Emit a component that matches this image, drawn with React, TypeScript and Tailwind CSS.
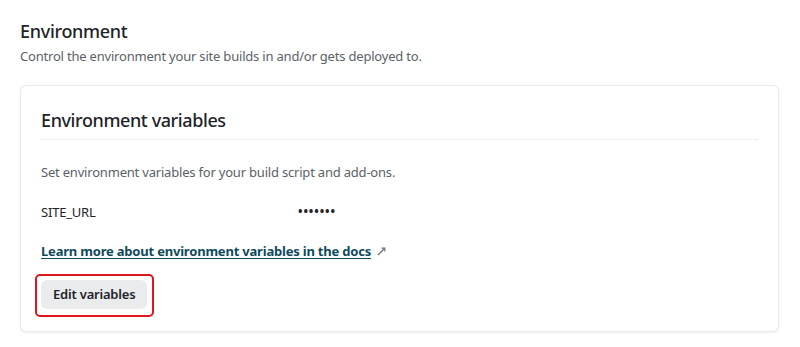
export default function App() {
  return (
    <div
      className="w-[800px] h-[347px] bg-white px-5 pt-[19px] text-[#1f2328] tracking-[-0.2px]"
      style={{ fontFamily: '"Noto Sans", "Open Sans", sans-serif' }}
    >
      <h2 className="text-[18px] leading-6 font-medium tracking-[-0.3px]">Environment</h2>
      <p className="mt-[3px] text-[13px] leading-5 text-[#5b5f66]">
        Control the environment your site builds in and/or gets deployed to.
      </p>

      <section className="mt-[19px] w-[759px] rounded-md border border-[#e8e9ec] bg-white shadow-[0_1px_3px_rgba(0,0,0,0.07)]">
        <div className="mx-5 pt-[22px] pb-[7px] border-b border-dotted border-[#e3e4e7]">
          <h3 className="text-[18px] leading-6 font-medium tracking-[-0.4px]">Environment variables</h3>
        </div>

        <div className="px-5 pt-[22px] pb-[14px]">
          <p className="text-[13px] leading-5 text-[#5b5f66]">
            Set environment variables for your build script and add-ons.
          </p>

          <div className="mt-5 flex items-center text-[13px] leading-5">
            <span className="w-[257px]">SITE_URL</span>
            <span className="text-[12px] font-bold tracking-[0.9px]">•••••••</span>
          </div>

          <div className="mt-[19px] flex items-center gap-[6px] text-[13px] leading-5">
            <a href="#" className="font-bold text-[#0f4a5c] underline underline-offset-2">
              Learn more about environment variables in the docs
            </a>
            <svg width="9" height="9" viewBox="0 0 9 9" className="text-[#6b7078]" fill="none">
              <path d="M1 8 L7.5 1.5" stroke="currentColor" strokeWidth="1.2" />
              <path d="M4.5 1.2 H7.8 V4.5" stroke="currentColor" strokeWidth="1.2" />
            </svg>
          </div>

          <div className="mt-[13px] -ml-[6px] inline-flex rounded-[5px] border-2 border-[#e0161c] pt-[4px] pb-[6px] pl-[4px] pr-[5px]">
            <button className="h-[29px] rounded-[6px] bg-[#e9ebed] px-[12px] text-[13px] font-semibold text-[#1f2328]">
              Edit variables
            </button>
          </div>
        </div>
      </section>
    </div>
  );
}
